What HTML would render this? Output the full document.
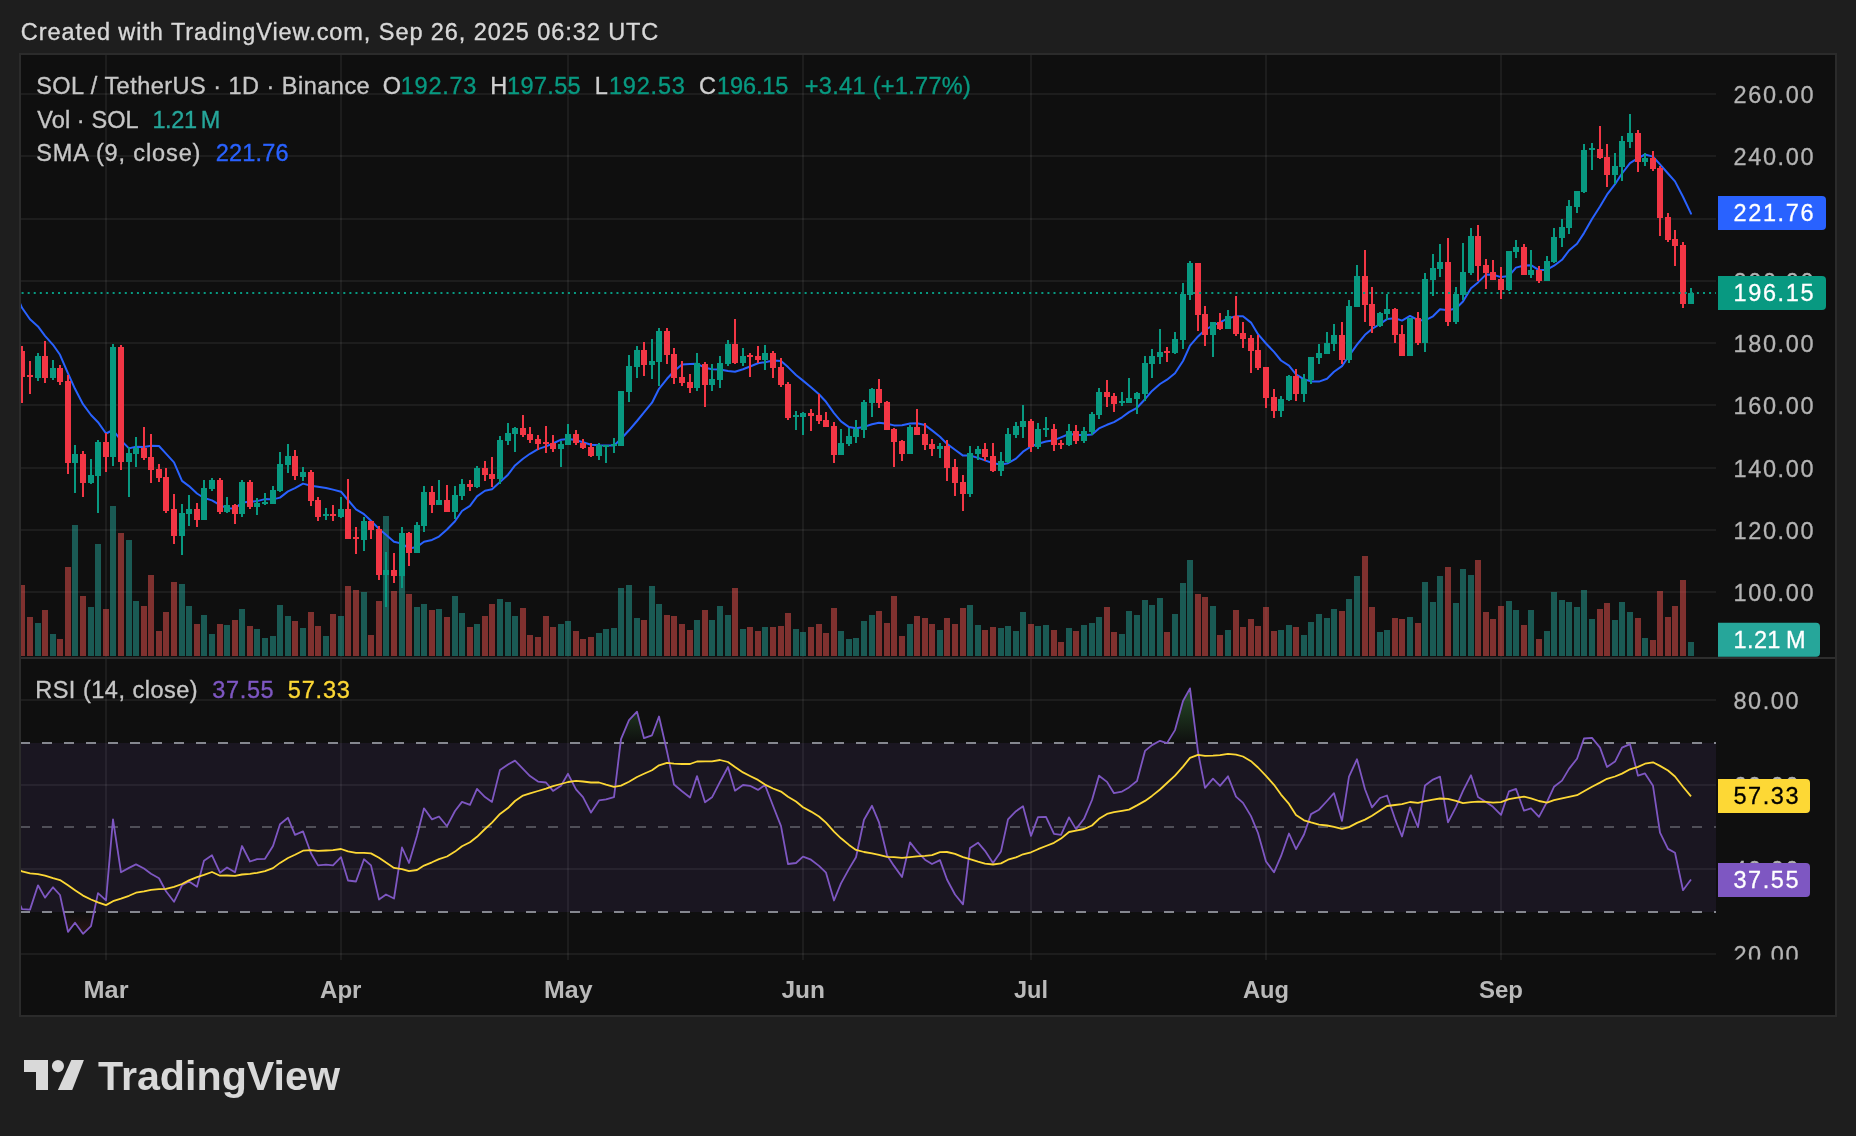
<!DOCTYPE html><html><head><meta charset="utf-8"><title>SOL / TetherUS chart</title><style>html,body{margin:0;padding:0;background:#1e1e1e;overflow:hidden}body{width:1856px;height:1136px}</style></head><body><svg width="1856" height="1136" viewBox="0 0 1856 1136" font-family='"Liberation Sans", Arial, sans-serif' style="display:block;will-change:transform"><rect width="1856" height="1136" fill="#1e1e1e"/><rect x="20" y="54" width="1816" height="962" fill="#0f0f0f" stroke="#2b2b2b" stroke-width="2"/><text x="20.75" y="40" font-size="23.5" fill="#d8d8d8" stroke="#d8d8d8" stroke-width="0.35" textLength="637.6" lengthAdjust="spacing">Created with TradingView.com, Sep 26, 2025 06:32 UTC</text><defs><clipPath id="cpm"><rect x="21" y="55" width="1695" height="602"/></clipPath><clipPath id="cpr"><rect x="21" y="659" width="1695" height="296"/></clipPath><clipPath id="cpax"><rect x="1717" y="659" width="118" height="300.5"/></clipPath><linearGradient id="gUp" gradientUnits="userSpaceOnUse" x1="0" y1="616" x2="0" y2="743"><stop offset="0" stop-color="#4caf50" stop-opacity="0.9"/><stop offset="1" stop-color="#4caf50" stop-opacity="0"/></linearGradient><linearGradient id="gDn" gradientUnits="userSpaceOnUse" x1="0" y1="912" x2="0" y2="1039"><stop offset="0" stop-color="#ff5252" stop-opacity="0"/><stop offset="1" stop-color="#ff5252" stop-opacity="0.7"/></linearGradient><clipPath id="cpUp"><rect x="21" y="659" width="1695" height="84.1"/></clipPath><clipPath id="cpDn"><rect x="21" y="911.9" width="1695" height="43"/></clipPath></defs><rect x="21" y="743.0" width="1695" height="169.0" fill="#7e57c2" fill-opacity="0.1"/><path d="M106.0 55V960 M341.0 55V960 M568.0 55V960 M803.0 55V960 M1031.0 55V960 M1266.0 55V960 M1501.0 55V960" stroke="#ffffff" stroke-opacity="0.058" stroke-width="2" fill="none"/><path d="M21 592.0H1716 M21 530.0H1716 M21 468.0H1716 M21 405.0H1716 M21 343.0H1716 M21 281.0H1716 M21 219.0H1716 M21 156.0H1716 M21 94.0H1716 M21 700.0H1716 M21 785.0H1716 M21 869.0H1716 M21 954.0H1716" stroke="#ffffff" stroke-opacity="0.058" stroke-width="2" fill="none"/><path d="M21 658H1835" stroke="#2e2e2e" stroke-width="2" fill="none"/><g clip-path="url(#cpm)"><path d="M35.00 623.0h6.0V656h-6.0zM50.00 634.0h6.0V656h-6.0zM72.00 525.0h6.0V656h-6.0zM88.00 607.0h6.0V656h-6.0zM95.00 544.0h6.0V656h-6.0zM110.00 506.0h6.0V656h-6.0zM126.00 540.0h6.0V656h-6.0zM133.00 601.0h6.0V656h-6.0zM179.00 584.0h6.0V656h-6.0zM186.00 606.0h6.0V656h-6.0zM201.00 615.0h6.0V656h-6.0zM209.00 634.0h6.0V656h-6.0zM224.00 625.0h6.0V656h-6.0zM239.00 609.0h6.0V656h-6.0zM254.00 629.0h6.0V656h-6.0zM262.00 638.0h6.0V656h-6.0zM270.00 636.0h6.0V656h-6.0zM277.00 605.0h6.0V656h-6.0zM285.00 616.0h6.0V656h-6.0zM300.00 628.0h6.0V656h-6.0zM323.00 636.0h6.0V656h-6.0zM338.00 616.0h6.0V656h-6.0zM361.00 592.0h6.0V656h-6.0zM383.00 516.0h6.0V656h-6.0zM399.00 543.0h6.0V656h-6.0zM414.00 607.0h6.0V656h-6.0zM421.00 604.0h6.0V656h-6.0zM436.00 609.0h6.0V656h-6.0zM452.00 596.0h6.0V656h-6.0zM459.00 613.0h6.0V656h-6.0zM474.00 624.0h6.0V656h-6.0zM497.00 599.0h6.0V656h-6.0zM505.00 602.0h6.0V656h-6.0zM512.00 616.0h6.0V656h-6.0zM558.00 624.0h6.0V656h-6.0zM565.00 621.0h6.0V656h-6.0zM596.00 633.0h6.0V656h-6.0zM603.00 629.0h6.0V656h-6.0zM611.00 628.0h6.0V656h-6.0zM618.00 588.0h6.0V656h-6.0zM626.00 585.0h6.0V656h-6.0zM634.00 618.0h6.0V656h-6.0zM649.00 586.0h6.0V656h-6.0zM656.00 604.0h6.0V656h-6.0zM694.00 620.0h6.0V656h-6.0zM709.00 620.0h6.0V656h-6.0zM717.00 606.0h6.0V656h-6.0zM725.00 615.0h6.0V656h-6.0zM740.00 629.0h6.0V656h-6.0zM762.00 627.0h6.0V656h-6.0zM793.00 629.0h6.0V656h-6.0zM800.00 632.0h6.0V656h-6.0zM838.00 631.0h6.0V656h-6.0zM846.00 639.0h6.0V656h-6.0zM853.00 638.0h6.0V656h-6.0zM861.00 621.0h6.0V656h-6.0zM869.00 615.0h6.0V656h-6.0zM907.00 624.0h6.0V656h-6.0zM937.00 630.0h6.0V656h-6.0zM967.00 605.0h6.0V656h-6.0zM975.00 625.0h6.0V656h-6.0zM998.00 628.0h6.0V656h-6.0zM1005.00 626.0h6.0V656h-6.0zM1013.00 631.0h6.0V656h-6.0zM1020.00 612.0h6.0V656h-6.0zM1035.00 626.0h6.0V656h-6.0zM1043.00 625.0h6.0V656h-6.0zM1066.00 628.0h6.0V656h-6.0zM1081.00 625.0h6.0V656h-6.0zM1089.00 623.0h6.0V656h-6.0zM1096.00 617.0h6.0V656h-6.0zM1119.00 634.0h6.0V656h-6.0zM1126.00 611.0h6.0V656h-6.0zM1134.00 615.0h6.0V656h-6.0zM1142.00 600.0h6.0V656h-6.0zM1149.00 605.0h6.0V656h-6.0zM1157.00 598.0h6.0V656h-6.0zM1172.00 614.0h6.0V656h-6.0zM1180.00 583.0h6.0V656h-6.0zM1187.00 560.0h6.0V656h-6.0zM1210.00 606.0h6.0V656h-6.0zM1225.00 630.0h6.0V656h-6.0zM1278.00 630.0h6.0V656h-6.0zM1286.00 625.0h6.0V656h-6.0zM1301.00 635.0h6.0V656h-6.0zM1308.00 622.0h6.0V656h-6.0zM1316.00 614.0h6.0V656h-6.0zM1324.00 618.0h6.0V656h-6.0zM1331.00 609.0h6.0V656h-6.0zM1346.00 599.0h6.0V656h-6.0zM1354.00 576.0h6.0V656h-6.0zM1377.00 632.0h6.0V656h-6.0zM1384.00 630.0h6.0V656h-6.0zM1407.00 617.0h6.0V656h-6.0zM1422.00 582.0h6.0V656h-6.0zM1430.00 602.0h6.0V656h-6.0zM1437.00 576.0h6.0V656h-6.0zM1453.00 603.0h6.0V656h-6.0zM1460.00 569.0h6.0V656h-6.0zM1468.00 575.0h6.0V656h-6.0zM1506.00 601.0h6.0V656h-6.0zM1513.00 610.0h6.0V656h-6.0zM1528.00 610.0h6.0V656h-6.0zM1544.00 631.0h6.0V656h-6.0zM1551.00 592.0h6.0V656h-6.0zM1559.00 600.0h6.0V656h-6.0zM1566.00 602.0h6.0V656h-6.0zM1574.00 607.0h6.0V656h-6.0zM1581.00 590.0h6.0V656h-6.0zM1589.00 619.0h6.0V656h-6.0zM1612.00 620.0h6.0V656h-6.0zM1619.00 602.0h6.0V656h-6.0zM1627.00 612.0h6.0V656h-6.0zM1642.00 638.0h6.0V656h-6.0zM1688.00 642.0h6.0V656h-6.0z" fill="#26a69a" fill-opacity="0.5"/><path d="M19.00 585.0h6.0V656h-6.0zM27.00 617.0h6.0V656h-6.0zM42.00 610.0h6.0V656h-6.0zM57.00 639.0h6.0V656h-6.0zM65.00 567.0h6.0V656h-6.0zM80.00 596.0h6.0V656h-6.0zM103.00 609.0h6.0V656h-6.0zM118.00 533.0h6.0V656h-6.0zM141.00 606.0h6.0V656h-6.0zM148.00 575.0h6.0V656h-6.0zM156.00 631.0h6.0V656h-6.0zM163.00 612.0h6.0V656h-6.0zM171.00 582.0h6.0V656h-6.0zM194.00 624.0h6.0V656h-6.0zM217.00 624.0h6.0V656h-6.0zM232.00 620.0h6.0V656h-6.0zM247.00 626.0h6.0V656h-6.0zM292.00 621.0h6.0V656h-6.0zM308.00 612.0h6.0V656h-6.0zM315.00 626.0h6.0V656h-6.0zM330.00 614.0h6.0V656h-6.0zM345.00 586.0h6.0V656h-6.0zM353.00 590.0h6.0V656h-6.0zM368.00 635.0h6.0V656h-6.0zM376.00 601.0h6.0V656h-6.0zM391.00 591.0h6.0V656h-6.0zM406.00 594.0h6.0V656h-6.0zM429.00 610.0h6.0V656h-6.0zM444.00 617.0h6.0V656h-6.0zM467.00 627.0h6.0V656h-6.0zM482.00 616.0h6.0V656h-6.0zM489.00 604.0h6.0V656h-6.0zM520.00 608.0h6.0V656h-6.0zM527.00 635.0h6.0V656h-6.0zM535.00 637.0h6.0V656h-6.0zM543.00 616.0h6.0V656h-6.0zM550.00 627.0h6.0V656h-6.0zM573.00 631.0h6.0V656h-6.0zM580.00 639.0h6.0V656h-6.0zM588.00 637.0h6.0V656h-6.0zM641.00 620.0h6.0V656h-6.0zM664.00 615.0h6.0V656h-6.0zM671.00 616.0h6.0V656h-6.0zM679.00 624.0h6.0V656h-6.0zM687.00 630.0h6.0V656h-6.0zM702.00 610.0h6.0V656h-6.0zM732.00 588.0h6.0V656h-6.0zM747.00 627.0h6.0V656h-6.0zM755.00 631.0h6.0V656h-6.0zM770.00 627.0h6.0V656h-6.0zM778.00 626.0h6.0V656h-6.0zM785.00 613.0h6.0V656h-6.0zM808.00 627.0h6.0V656h-6.0zM816.00 624.0h6.0V656h-6.0zM823.00 633.0h6.0V656h-6.0zM831.00 608.0h6.0V656h-6.0zM876.00 611.0h6.0V656h-6.0zM884.00 623.0h6.0V656h-6.0zM891.00 596.0h6.0V656h-6.0zM899.00 636.0h6.0V656h-6.0zM914.00 616.0h6.0V656h-6.0zM922.00 618.0h6.0V656h-6.0zM929.00 624.0h6.0V656h-6.0zM944.00 618.0h6.0V656h-6.0zM952.00 624.0h6.0V656h-6.0zM960.00 608.0h6.0V656h-6.0zM982.00 630.0h6.0V656h-6.0zM990.00 627.0h6.0V656h-6.0zM1028.00 624.0h6.0V656h-6.0zM1051.00 630.0h6.0V656h-6.0zM1058.00 642.0h6.0V656h-6.0zM1073.00 631.0h6.0V656h-6.0zM1104.00 607.0h6.0V656h-6.0zM1111.00 632.0h6.0V656h-6.0zM1164.00 632.0h6.0V656h-6.0zM1195.00 594.0h6.0V656h-6.0zM1202.00 597.0h6.0V656h-6.0zM1217.00 635.0h6.0V656h-6.0zM1233.00 610.0h6.0V656h-6.0zM1240.00 627.0h6.0V656h-6.0zM1248.00 619.0h6.0V656h-6.0zM1255.00 626.0h6.0V656h-6.0zM1263.00 607.0h6.0V656h-6.0zM1271.00 631.0h6.0V656h-6.0zM1293.00 627.0h6.0V656h-6.0zM1339.00 611.0h6.0V656h-6.0zM1362.00 556.0h6.0V656h-6.0zM1369.00 607.0h6.0V656h-6.0zM1392.00 618.0h6.0V656h-6.0zM1399.00 619.0h6.0V656h-6.0zM1415.00 623.0h6.0V656h-6.0zM1445.00 567.0h6.0V656h-6.0zM1475.00 560.0h6.0V656h-6.0zM1483.00 612.0h6.0V656h-6.0zM1490.00 619.0h6.0V656h-6.0zM1498.00 606.0h6.0V656h-6.0zM1521.00 625.0h6.0V656h-6.0zM1536.00 639.0h6.0V656h-6.0zM1597.00 609.0h6.0V656h-6.0zM1604.00 603.0h6.0V656h-6.0zM1635.00 618.0h6.0V656h-6.0zM1650.00 640.0h6.0V656h-6.0zM1657.00 591.0h6.0V656h-6.0zM1665.00 617.0h6.0V656h-6.0zM1672.00 606.0h6.0V656h-6.0zM1680.00 580.0h6.0V656h-6.0z" fill="#ef5350" fill-opacity="0.5"/><polyline points="15.0,292.0 22.0,307.8 30.0,319.2 38.0,326.4 45.0,335.8 53.0,344.8 60.0,354.8 68.0,373.4 75.0,388.8 83.0,404.2 91.0,415.0 98.0,422.2 106.0,433.5 113.0,430.0 121.0,440.4 129.0,448.4 136.0,446.7 144.0,447.1 151.0,445.7 159.0,446.0 166.0,453.7 174.0,462.4 182.0,480.9 189.0,486.1 197.0,493.5 204.0,498.0 212.0,500.4 220.0,505.1 227.0,508.2 235.0,508.5 242.0,502.5 250.0,501.8 257.0,501.1 265.0,499.1 273.0,499.4 280.0,497.6 288.0,491.4 295.0,488.2 303.0,483.6 311.0,485.7 318.0,486.8 326.0,488.0 333.0,489.6 341.0,491.7 348.0,500.0 356.0,509.3 364.0,514.2 371.0,520.7 379.0,528.9 386.0,534.8 394.0,541.7 402.0,543.6 409.0,548.4 417.0,546.9 424.0,541.7 432.0,539.9 439.0,536.6 447.0,529.5 455.0,521.2 462.0,511.0 470.0,505.8 477.0,496.4 485.0,490.8 492.0,489.3 500.0,482.1 508.0,474.7 515.0,465.4 523.0,458.7 530.0,453.8 538.0,449.1 546.0,446.4 553.0,443.5 561.0,439.7 568.0,439.0 576.0,440.1 583.0,442.3 591.0,444.7 599.0,445.3 606.0,445.4 614.0,445.4 621.0,439.0 629.0,430.3 637.0,421.0 644.0,412.3 652.0,402.7 659.0,388.8 667.0,378.8 674.0,371.3 682.0,364.5 690.0,364.1 697.0,363.8 705.0,367.7 712.0,369.2 720.0,369.5 728.0,370.9 735.0,371.8 743.0,369.3 750.0,366.5 758.0,363.3 765.0,362.2 773.0,360.4 781.0,361.0 788.0,367.1 796.0,375.0 803.0,380.6 811.0,387.2 819.0,394.3 826.0,401.8 834.0,413.1 841.0,421.4 849.0,427.1 856.0,428.3 864.0,426.9 872.0,424.2 879.0,422.7 887.0,423.7 894.0,425.4 902.0,425.2 910.0,423.5 917.0,423.3 925.0,425.1 932.0,430.4 940.0,436.7 947.0,443.9 955.0,449.8 963.0,455.6 970.0,455.5 978.0,457.9 985.0,460.4 993.0,463.3 1001.0,464.6 1008.0,463.2 1016.0,458.6 1023.0,451.7 1031.0,446.5 1038.0,443.8 1046.0,441.5 1054.0,440.2 1061.0,437.3 1069.0,434.0 1076.0,434.8 1084.0,435.3 1092.0,434.5 1099.0,428.4 1107.0,424.8 1114.0,422.1 1122.0,417.3 1129.0,412.1 1137.0,407.8 1145.0,399.2 1152.0,390.9 1160.0,384.0 1167.0,379.7 1175.0,373.2 1183.0,361.0 1190.0,345.7 1198.0,336.4 1205.0,330.0 1213.0,325.4 1220.0,322.4 1228.0,318.4 1236.0,316.3 1243.0,316.3 1251.0,322.6 1258.0,334.2 1266.0,343.5 1274.0,351.9 1281.0,360.5 1289.0,365.7 1296.0,374.4 1304.0,379.3 1311.0,381.4 1319.0,381.6 1327.0,378.8 1334.0,371.8 1342.0,366.1 1349.0,355.8 1357.0,344.7 1365.0,334.8 1372.0,328.9 1380.0,324.0 1387.0,319.1 1395.0,318.2 1402.0,320.6 1410.0,315.9 1418.0,320.0 1425.0,320.4 1433.0,316.3 1440.0,309.2 1448.0,310.2 1456.0,308.5 1463.0,301.5 1471.0,288.2 1478.0,282.4 1486.0,274.6 1493.0,274.7 1501.0,277.1 1509.0,275.9 1516.0,267.6 1524.0,265.5 1531.0,265.2 1539.0,270.2 1547.0,269.7 1554.0,265.7 1562.0,259.8 1569.0,250.5 1577.0,243.8 1584.0,233.1 1592.0,219.0 1600.0,206.5 1607.0,194.7 1615.0,184.2 1622.0,173.5 1630.0,163.1 1638.0,158.2 1645.0,154.5 1653.0,156.6 1660.0,164.4 1668.0,173.5 1675.0,181.4 1683.0,196.7 1691.0,213.6" stroke="#2962ff" stroke-width="2" fill="none" stroke-linejoin="round" stroke-linecap="round"/><path d="M38.00 353.0V381.0M53.00 360.0V380.0M75.00 445.0V493.0M91.00 459.0V484.0M98.00 440.0V513.0M113.00 344.0V466.0M129.00 447.0V497.0M136.00 437.0V467.0M182.00 504.0V555.0M189.00 495.0V526.0M204.00 480.0V520.0M212.00 478.0V491.0M227.00 497.0V513.0M242.00 480.0V517.0M257.00 498.0V515.0M265.00 493.0V505.0M273.00 486.0V504.0M280.00 452.0V492.0M288.00 444.0V473.0M303.00 467.0V481.0M326.00 508.0V520.0M341.00 497.0V518.0M364.00 517.0V551.0M386.00 552.0V607.0M402.00 527.0V588.0M417.00 522.0V553.0M424.00 486.0V532.0M439.00 480.0V505.0M455.00 486.0V519.0M462.00 479.0V500.0M477.00 466.0V488.0M500.00 436.0V484.0M508.00 423.0V445.0M515.00 427.0V452.0M561.00 441.0V467.0M568.00 424.0V445.0M599.00 443.0V460.0M606.00 445.0V463.0M614.00 438.0V453.0M621.00 391.0V446.0M629.00 355.0V402.0M637.00 346.0V378.0M652.00 339.0V379.0M659.00 328.0V386.0M697.00 353.0V391.0M712.00 364.0V391.0M720.00 356.0V388.0M728.00 340.0V366.0M743.00 348.0V366.0M765.00 345.0V370.0M796.00 411.0V430.0M803.00 412.0V435.0M841.00 429.0V455.0M849.00 428.0V446.0M856.00 420.0V443.0M864.00 400.0V438.0M872.00 388.0V417.0M910.00 425.0V454.0M940.00 443.0V458.0M970.00 446.0V497.0M978.00 446.0V460.0M1001.00 452.0V476.0M1008.00 428.0V463.0M1016.00 422.0V438.0M1023.00 405.0V438.0M1038.00 423.0V449.0M1046.00 417.0V437.0M1069.00 424.0V446.0M1084.00 427.0V443.0M1092.00 412.0V435.0M1099.00 388.0V419.0M1122.00 392.0V406.0M1129.00 378.0V403.0M1137.00 392.0V414.0M1145.00 356.0V401.0M1152.00 349.0V378.0M1160.00 329.0V364.0M1175.00 332.0V354.0M1183.00 283.0V349.0M1190.00 261.0V300.0M1213.00 322.0V357.0M1228.00 310.0V329.0M1281.00 396.0V417.0M1289.00 375.0V401.0M1304.00 374.0V402.0M1311.00 357.0V384.0M1319.00 344.0V364.0M1327.00 332.0V354.0M1334.00 324.0V351.0M1349.00 300.0V363.0M1357.00 265.0V307.0M1380.00 312.0V327.0M1387.00 294.0V320.0M1410.00 318.0V356.0M1425.00 273.0V352.0M1433.00 254.0V296.0M1440.00 244.0V277.0M1456.00 287.0V324.0M1463.00 243.0V300.0M1471.00 228.0V275.0M1509.00 251.0V291.0M1516.00 240.0V258.0M1531.00 250.0V278.0M1547.00 256.0V281.0M1554.00 228.0V263.0M1562.00 219.0V247.0M1569.00 200.0V234.0M1577.00 191.0V213.0M1584.00 144.0V193.0M1592.00 143.0V170.0M1615.00 153.0V184.0M1622.00 136.0V181.0M1630.00 114.0V148.0M1645.00 153.0V166.0M1691.00 288.0V304.0" stroke="#089981" stroke-width="2" fill="none"/><path d="M35.00 356.0h6.0V378.0h-6.0zM50.00 368.0h6.0V378.0h-6.0zM72.00 454.0h6.0V463.0h-6.0zM88.00 475.0h6.0V483.0h-6.0zM95.00 442.0h6.0V476.0h-6.0zM110.00 347.0h6.0V457.0h-6.0zM126.00 453.0h6.0V462.0h-6.0zM133.00 448.0h6.0V454.0h-6.0zM179.00 513.0h6.0V536.0h-6.0zM186.00 509.0h6.0V514.0h-6.0zM201.00 488.0h6.0V520.0h-6.0zM209.00 480.0h6.0V489.0h-6.0zM224.00 505.0h6.0V512.0h-6.0zM239.00 482.0h6.0V514.0h-6.0zM254.00 503.0h6.0V507.0h-6.0zM262.00 502.0h6.0V504.0h-6.0zM270.00 490.0h6.0V504.0h-6.0zM277.00 464.0h6.0V491.0h-6.0zM285.00 456.0h6.0V465.0h-6.0zM300.00 472.0h6.0V477.0h-6.0zM323.00 514.0h6.0V516.0h-6.0zM338.00 509.0h6.0V517.0h-6.0zM361.00 521.0h6.0V540.0h-6.0zM383.00 570.0h6.0V575.0h-6.0zM399.00 533.0h6.0V576.0h-6.0zM414.00 525.0h6.0V553.0h-6.0zM421.00 492.0h6.0V526.0h-6.0zM436.00 500.0h6.0V505.0h-6.0zM452.00 495.0h6.0V512.0h-6.0zM459.00 484.0h6.0V496.0h-6.0zM474.00 468.0h6.0V487.0h-6.0zM497.00 440.0h6.0V479.0h-6.0zM505.00 433.0h6.0V441.0h-6.0zM512.00 428.0h6.0V434.0h-6.0zM558.00 444.0h6.0V449.0h-6.0zM565.00 434.0h6.0V445.0h-6.0zM596.00 445.0h6.0V456.0h-6.0zM603.00 445.0h6.0V447.0h-6.0zM611.00 444.0h6.0V446.0h-6.0zM618.00 391.0h6.0V446.0h-6.0zM626.00 366.0h6.0V392.0h-6.0zM634.00 350.0h6.0V367.0h-6.0zM649.00 361.0h6.0V365.0h-6.0zM656.00 331.0h6.0V362.0h-6.0zM694.00 363.0h6.0V388.0h-6.0zM709.00 379.0h6.0V385.0h-6.0zM717.00 363.0h6.0V380.0h-6.0zM725.00 344.0h6.0V364.0h-6.0zM740.00 356.0h6.0V363.0h-6.0zM762.00 353.0h6.0V360.0h-6.0zM793.00 415.0h6.0V417.0h-6.0zM800.00 413.0h6.0V417.0h-6.0zM838.00 443.0h6.0V455.0h-6.0zM846.00 436.0h6.0V444.0h-6.0zM853.00 429.0h6.0V437.0h-6.0zM861.00 402.0h6.0V430.0h-6.0zM869.00 389.0h6.0V403.0h-6.0zM907.00 427.0h6.0V454.0h-6.0zM937.00 446.0h6.0V449.0h-6.0zM967.00 453.0h6.0V494.0h-6.0zM975.00 449.0h6.0V454.0h-6.0zM998.00 461.0h6.0V471.0h-6.0zM1005.00 434.0h6.0V462.0h-6.0zM1013.00 426.0h6.0V435.0h-6.0zM1020.00 421.0h6.0V427.0h-6.0zM1035.00 429.0h6.0V447.0h-6.0zM1043.00 428.0h6.0V430.0h-6.0zM1066.00 431.0h6.0V445.0h-6.0zM1081.00 431.0h6.0V441.0h-6.0zM1089.00 414.0h6.0V432.0h-6.0zM1096.00 392.0h6.0V415.0h-6.0zM1119.00 401.0h6.0V403.0h-6.0zM1126.00 398.0h6.0V403.0h-6.0zM1134.00 393.0h6.0V399.0h-6.0zM1142.00 363.0h6.0V394.0h-6.0zM1149.00 356.0h6.0V364.0h-6.0zM1157.00 352.0h6.0V357.0h-6.0zM1172.00 339.0h6.0V353.0h-6.0zM1180.00 294.0h6.0V340.0h-6.0zM1187.00 263.0h6.0V295.0h-6.0zM1210.00 322.0h6.0V335.0h-6.0zM1225.00 316.0h6.0V329.0h-6.0zM1278.00 399.0h6.0V411.0h-6.0zM1286.00 376.0h6.0V400.0h-6.0zM1301.00 379.0h6.0V394.0h-6.0zM1308.00 357.0h6.0V380.0h-6.0zM1316.00 353.0h6.0V358.0h-6.0zM1324.00 343.0h6.0V354.0h-6.0zM1331.00 335.0h6.0V344.0h-6.0zM1346.00 306.0h6.0V360.0h-6.0zM1354.00 276.0h6.0V307.0h-6.0zM1377.00 313.0h6.0V326.0h-6.0zM1384.00 309.0h6.0V314.0h-6.0zM1407.00 318.0h6.0V356.0h-6.0zM1422.00 279.0h6.0V343.0h-6.0zM1430.00 268.0h6.0V280.0h-6.0zM1437.00 262.0h6.0V269.0h-6.0zM1453.00 294.0h6.0V322.0h-6.0zM1460.00 272.0h6.0V295.0h-6.0zM1468.00 236.0h6.0V273.0h-6.0zM1506.00 251.0h6.0V290.0h-6.0zM1513.00 247.0h6.0V252.0h-6.0zM1528.00 270.0h6.0V275.0h-6.0zM1544.00 261.0h6.0V281.0h-6.0zM1551.00 237.0h6.0V262.0h-6.0zM1559.00 227.0h6.0V238.0h-6.0zM1566.00 206.0h6.0V228.0h-6.0zM1574.00 191.0h6.0V207.0h-6.0zM1581.00 150.0h6.0V192.0h-6.0zM1589.00 148.0h6.0V150.0h-6.0zM1612.00 166.0h6.0V175.0h-6.0zM1619.00 141.0h6.0V167.0h-6.0zM1627.00 133.0h6.0V142.0h-6.0zM1642.00 158.0h6.0V162.0h-6.0zM1688.00 293.0h6.0V304.0h-6.0z" fill="#089981"/><path d="M22.00 346.0V403.0M30.00 361.0V394.0M45.00 341.0V383.0M60.00 365.0V385.0M68.00 375.0V474.0M83.00 451.0V497.0M106.00 433.0V472.0M121.00 345.0V470.0M144.00 427.0V460.0M151.00 434.0V483.0M159.00 464.0V482.0M166.00 468.0V513.0M174.00 494.0V544.0M197.00 503.0V527.0M220.00 478.0V514.0M235.00 504.0V524.0M250.00 480.0V509.0M295.00 450.0V480.0M311.00 470.0V506.0M318.00 497.0V521.0M333.00 505.0V521.0M348.00 479.0V539.0M356.00 527.0V554.0M371.00 521.0V539.0M379.00 526.0V580.0M394.00 553.0V583.0M409.00 532.0V566.0M432.00 486.0V513.0M447.00 485.0V512.0M470.00 480.0V491.0M485.00 461.0V481.0M492.00 457.0V487.0M523.00 415.0V437.0M530.00 427.0V443.0M538.00 435.0V450.0M546.00 426.0V453.0M553.00 435.0V452.0M576.00 430.0V445.0M583.00 439.0V449.0M591.00 443.0V457.0M644.00 342.0V376.0M667.00 328.0V364.0M674.00 348.0V384.0M682.00 361.0V386.0M690.00 374.0V393.0M705.00 362.0V407.0M735.00 319.0V364.0M750.00 353.0V377.0M758.00 346.0V363.0M773.00 351.0V378.0M781.00 358.0V387.0M788.00 382.0V420.0M811.00 409.0V431.0M819.00 394.0V424.0M826.00 412.0V427.0M834.00 422.0V463.0M879.00 379.0V408.0M887.00 401.0V430.0M894.00 428.0V467.0M902.00 440.0V461.0M917.00 409.0V435.0M925.00 423.0V450.0M932.00 439.0V456.0M947.00 440.0V481.0M955.00 459.0V496.0M963.00 475.0V511.0M985.00 443.0V461.0M993.00 443.0V472.0M1031.00 419.0V452.0M1054.00 424.0V451.0M1061.00 440.0V449.0M1076.00 425.0V444.0M1107.00 380.0V407.0M1114.00 393.0V412.0M1167.00 347.0V362.0M1198.00 263.0V331.0M1205.00 306.0V346.0M1220.00 313.0V330.0M1236.00 296.0V336.0M1243.00 322.0V348.0M1251.00 335.0V373.0M1258.00 335.0V370.0M1266.00 367.0V408.0M1274.00 389.0V418.0M1296.00 369.0V401.0M1342.00 322.0V364.0M1365.00 250.0V322.0M1372.00 287.0V333.0M1395.00 308.0V343.0M1402.00 325.0V356.0M1418.00 312.0V345.0M1448.00 238.0V326.0M1478.00 225.0V281.0M1486.00 259.0V289.0M1493.00 260.0V280.0M1501.00 267.0V299.0M1524.00 244.0V275.0M1539.00 266.0V283.0M1600.00 126.0V159.0M1607.00 144.0V187.0M1638.00 130.0V172.0M1653.00 151.0V171.0M1660.00 166.0V236.0M1668.00 213.0V242.0M1675.00 230.0V266.0M1683.00 242.0V308.0" stroke="#f23645" stroke-width="2" fill="none"/><path d="M19.00 351.0h6.0V377.0h-6.0zM27.00 375.0h6.0V377.0h-6.0zM42.00 356.0h6.0V378.0h-6.0zM57.00 368.0h6.0V382.0h-6.0zM65.00 381.0h6.0V463.0h-6.0zM80.00 454.0h6.0V483.0h-6.0zM103.00 442.0h6.0V457.0h-6.0zM118.00 347.0h6.0V462.0h-6.0zM141.00 448.0h6.0V458.0h-6.0zM148.00 457.0h6.0V470.0h-6.0zM156.00 469.0h6.0V478.0h-6.0zM163.00 477.0h6.0V511.0h-6.0zM171.00 509.0h6.0V536.0h-6.0zM194.00 509.0h6.0V520.0h-6.0zM217.00 480.0h6.0V512.0h-6.0zM232.00 505.0h6.0V514.0h-6.0zM247.00 482.0h6.0V507.0h-6.0zM292.00 456.0h6.0V476.0h-6.0zM308.00 472.0h6.0V501.0h-6.0zM315.00 500.0h6.0V517.0h-6.0zM330.00 514.0h6.0V516.0h-6.0zM345.00 509.0h6.0V539.0h-6.0zM353.00 537.0h6.0V539.0h-6.0zM368.00 521.0h6.0V530.0h-6.0zM376.00 529.0h6.0V575.0h-6.0zM391.00 570.0h6.0V576.0h-6.0zM406.00 533.0h6.0V553.0h-6.0zM429.00 492.0h6.0V505.0h-6.0zM444.00 500.0h6.0V512.0h-6.0zM467.00 484.0h6.0V487.0h-6.0zM482.00 468.0h6.0V475.0h-6.0zM489.00 474.0h6.0V479.0h-6.0zM520.00 428.0h6.0V435.0h-6.0zM527.00 434.0h6.0V440.0h-6.0zM535.00 439.0h6.0V444.0h-6.0zM543.00 442.0h6.0V444.0h-6.0zM550.00 443.0h6.0V449.0h-6.0zM573.00 434.0h6.0V443.0h-6.0zM580.00 443.0h6.0V448.0h-6.0zM588.00 447.0h6.0V456.0h-6.0zM641.00 350.0h6.0V365.0h-6.0zM664.00 331.0h6.0V355.0h-6.0zM671.00 354.0h6.0V378.0h-6.0zM679.00 377.0h6.0V383.0h-6.0zM687.00 382.0h6.0V388.0h-6.0zM702.00 364.0h6.0V385.0h-6.0zM732.00 344.0h6.0V363.0h-6.0zM747.00 355.0h6.0V357.0h-6.0zM755.00 356.0h6.0V360.0h-6.0zM770.00 353.0h6.0V368.0h-6.0zM778.00 367.0h6.0V385.0h-6.0zM785.00 384.0h6.0V418.0h-6.0zM808.00 413.0h6.0V416.0h-6.0zM816.00 415.0h6.0V421.0h-6.0zM823.00 420.0h6.0V427.0h-6.0zM831.00 426.0h6.0V455.0h-6.0zM876.00 389.0h6.0V403.0h-6.0zM884.00 402.0h6.0V430.0h-6.0zM891.00 429.0h6.0V442.0h-6.0zM899.00 441.0h6.0V454.0h-6.0zM914.00 427.0h6.0V435.0h-6.0zM922.00 434.0h6.0V445.0h-6.0zM929.00 444.0h6.0V449.0h-6.0zM944.00 446.0h6.0V468.0h-6.0zM952.00 467.0h6.0V483.0h-6.0zM960.00 482.0h6.0V494.0h-6.0zM982.00 449.0h6.0V457.0h-6.0zM990.00 456.0h6.0V471.0h-6.0zM1028.00 421.0h6.0V447.0h-6.0zM1051.00 429.0h6.0V445.0h-6.0zM1058.00 443.0h6.0V445.0h-6.0zM1073.00 431.0h6.0V441.0h-6.0zM1104.00 392.0h6.0V397.0h-6.0zM1111.00 396.0h6.0V404.0h-6.0zM1164.00 351.0h6.0V353.0h-6.0zM1195.00 263.0h6.0V315.0h-6.0zM1202.00 314.0h6.0V335.0h-6.0zM1217.00 322.0h6.0V329.0h-6.0zM1233.00 316.0h6.0V334.0h-6.0zM1240.00 333.0h6.0V339.0h-6.0zM1248.00 338.0h6.0V351.0h-6.0zM1255.00 350.0h6.0V368.0h-6.0zM1263.00 367.0h6.0V398.0h-6.0zM1271.00 397.0h6.0V411.0h-6.0zM1293.00 376.0h6.0V394.0h-6.0zM1339.00 335.0h6.0V360.0h-6.0zM1362.00 276.0h6.0V305.0h-6.0zM1369.00 304.0h6.0V326.0h-6.0zM1392.00 309.0h6.0V335.0h-6.0zM1399.00 334.0h6.0V356.0h-6.0zM1415.00 318.0h6.0V343.0h-6.0zM1445.00 262.0h6.0V322.0h-6.0zM1475.00 236.0h6.0V266.0h-6.0zM1483.00 265.0h6.0V273.0h-6.0zM1490.00 272.0h6.0V280.0h-6.0zM1498.00 279.0h6.0V290.0h-6.0zM1521.00 247.0h6.0V275.0h-6.0zM1536.00 270.0h6.0V281.0h-6.0zM1597.00 149.0h6.0V158.0h-6.0zM1604.00 157.0h6.0V175.0h-6.0zM1635.00 133.0h6.0V162.0h-6.0zM1650.00 158.0h6.0V169.0h-6.0zM1657.00 168.0h6.0V218.0h-6.0zM1665.00 217.0h6.0V240.0h-6.0zM1672.00 239.0h6.0V246.0h-6.0zM1680.00 245.0h6.0V304.0h-6.0z" fill="#f23645"/><path d="M21.6 293H1716" stroke="#089981" stroke-width="2" stroke-dasharray="2 4.07" fill="none"/></g><g clip-path="url(#cpr)"><path d="M20 743.0H1716" stroke="#85878f" stroke-opacity="1" stroke-width="2" stroke-dasharray="10 12" fill="none"/><path d="M20 827.0H1716" stroke="#85878f" stroke-opacity="0.5" stroke-width="2" stroke-dasharray="10 12" fill="none"/><path d="M20 912.0H1716" stroke="#85878f" stroke-opacity="1" stroke-width="2" stroke-dasharray="10 12" fill="none"/><path d="M15.0,893.6 L22.0,909.2 L30.0,909.6 L38.0,885.3 L45.0,897.6 L53.0,887.3 L60.0,895.0 L68.0,931.9 L75.0,922.8 L83.0,933.8 L91.0,926.1 L98.0,893.1 L106.0,900.3 L113.0,819.4 L121.0,872.3 L129.0,867.9 L136.0,864.4 L144.0,868.5 L151.0,873.7 L159.0,878.2 L166.0,891.2 L174.0,901.8 L182.0,885.3 L189.0,881.5 L197.0,886.7 L204.0,860.7 L212.0,855.3 L220.0,872.7 L227.0,867.5 L235.0,872.3 L242.0,846.0 L250.0,861.5 L257.0,859.2 L265.0,858.8 L273.0,846.0 L280.0,824.2 L288.0,817.8 L295.0,834.9 L303.0,831.4 L311.0,853.3 L318.0,865.4 L326.0,864.6 L333.0,865.4 L341.0,857.2 L348.0,880.5 L356.0,881.5 L364.0,859.3 L371.0,865.4 L379.0,899.5 L386.0,894.5 L394.0,898.5 L402.0,847.5 L409.0,863.0 L417.0,835.7 L424.0,808.3 L432.0,819.4 L439.0,816.5 L447.0,826.2 L455.0,811.0 L462.0,801.9 L470.0,804.8 L477.0,788.9 L485.0,797.1 L492.0,801.9 L500.0,769.9 L508.0,764.5 L515.0,760.6 L523.0,768.9 L530.0,776.1 L538.0,781.6 L546.0,782.5 L553.0,790.9 L561.0,785.8 L568.0,773.8 L576.0,789.3 L583.0,797.1 L591.0,812.6 L599.0,800.4 L606.0,799.4 L614.0,797.1 L621.0,739.1 L629.0,720.1 L637.0,711.7 L644.0,738.2 L652.0,735.3 L659.0,716.5 L667.0,751.5 L674.0,784.5 L682.0,791.3 L690.0,797.5 L697.0,776.1 L705.0,802.3 L712.0,797.3 L720.0,781.8 L728.0,767.0 L735.0,790.7 L743.0,785.0 L750.0,785.8 L758.0,789.9 L765.0,785.0 L773.0,805.8 L781.0,826.2 L788.0,864.0 L796.0,863.0 L803.0,856.6 L811.0,859.7 L819.0,865.9 L826.0,872.7 L834.0,900.5 L841.0,883.4 L849.0,868.9 L856.0,857.2 L864.0,819.8 L872.0,805.8 L879.0,822.3 L887.0,855.3 L894.0,865.9 L902.0,877.0 L910.0,842.3 L917.0,851.4 L925.0,859.7 L932.0,864.0 L940.0,860.1 L947.0,879.5 L955.0,894.5 L963.0,904.4 L970.0,847.9 L978.0,842.7 L985.0,850.8 L993.0,863.0 L1001.0,851.4 L1008.0,819.4 L1016.0,811.2 L1023.0,806.2 L1031.0,835.9 L1038.0,817.1 L1046.0,816.9 L1054.0,833.9 L1061.0,834.9 L1069.0,817.4 L1076.0,829.1 L1084.0,818.8 L1092.0,800.0 L1099.0,775.7 L1107.0,781.9 L1114.0,793.2 L1122.0,791.6 L1129.0,787.4 L1137.0,781.0 L1145.0,750.9 L1152.0,745.1 L1160.0,740.8 L1167.0,743.1 L1175.0,730.1 L1183.0,701.0 L1190.0,688.4 L1198.0,752.0 L1205.0,787.8 L1213.0,778.6 L1220.0,785.8 L1228.0,776.3 L1236.0,796.7 L1243.0,802.9 L1251.0,816.1 L1258.0,833.0 L1266.0,861.5 L1274.0,872.3 L1281.0,856.2 L1289.0,833.5 L1296.0,849.1 L1304.0,834.5 L1311.0,814.1 L1319.0,809.7 L1327.0,801.0 L1334.0,793.2 L1342.0,820.9 L1349.0,776.7 L1357.0,759.2 L1365.0,789.3 L1372.0,807.4 L1380.0,798.0 L1387.0,795.5 L1395.0,818.8 L1402.0,836.5 L1410.0,807.3 L1418.0,827.1 L1425.0,785.4 L1433.0,779.6 L1440.0,776.7 L1448.0,822.3 L1456.0,806.8 L1463.0,790.9 L1471.0,775.2 L1478.0,797.1 L1486.0,801.9 L1493.0,806.8 L1501.0,814.9 L1509.0,791.3 L1516.0,788.9 L1524.0,810.7 L1531.0,808.3 L1539.0,816.9 L1547.0,801.9 L1554.0,786.8 L1562.0,780.6 L1569.0,768.9 L1577.0,758.7 L1584.0,738.5 L1592.0,737.9 L1600.0,747.6 L1607.0,767.0 L1615.0,761.6 L1622.0,747.6 L1630.0,744.1 L1638.0,775.7 L1645.0,773.4 L1653.0,785.8 L1660.0,832.6 L1668.0,848.9 L1675.0,852.7 L1683.0,890.2 L1691.0,879.5 L1691.0,743.0 L15.0,743.0z" fill="url(#gUp)" clip-path="url(#cpUp)"/><path d="M15.0,893.6 L22.0,909.2 L30.0,909.6 L38.0,885.3 L45.0,897.6 L53.0,887.3 L60.0,895.0 L68.0,931.9 L75.0,922.8 L83.0,933.8 L91.0,926.1 L98.0,893.1 L106.0,900.3 L113.0,819.4 L121.0,872.3 L129.0,867.9 L136.0,864.4 L144.0,868.5 L151.0,873.7 L159.0,878.2 L166.0,891.2 L174.0,901.8 L182.0,885.3 L189.0,881.5 L197.0,886.7 L204.0,860.7 L212.0,855.3 L220.0,872.7 L227.0,867.5 L235.0,872.3 L242.0,846.0 L250.0,861.5 L257.0,859.2 L265.0,858.8 L273.0,846.0 L280.0,824.2 L288.0,817.8 L295.0,834.9 L303.0,831.4 L311.0,853.3 L318.0,865.4 L326.0,864.6 L333.0,865.4 L341.0,857.2 L348.0,880.5 L356.0,881.5 L364.0,859.3 L371.0,865.4 L379.0,899.5 L386.0,894.5 L394.0,898.5 L402.0,847.5 L409.0,863.0 L417.0,835.7 L424.0,808.3 L432.0,819.4 L439.0,816.5 L447.0,826.2 L455.0,811.0 L462.0,801.9 L470.0,804.8 L477.0,788.9 L485.0,797.1 L492.0,801.9 L500.0,769.9 L508.0,764.5 L515.0,760.6 L523.0,768.9 L530.0,776.1 L538.0,781.6 L546.0,782.5 L553.0,790.9 L561.0,785.8 L568.0,773.8 L576.0,789.3 L583.0,797.1 L591.0,812.6 L599.0,800.4 L606.0,799.4 L614.0,797.1 L621.0,739.1 L629.0,720.1 L637.0,711.7 L644.0,738.2 L652.0,735.3 L659.0,716.5 L667.0,751.5 L674.0,784.5 L682.0,791.3 L690.0,797.5 L697.0,776.1 L705.0,802.3 L712.0,797.3 L720.0,781.8 L728.0,767.0 L735.0,790.7 L743.0,785.0 L750.0,785.8 L758.0,789.9 L765.0,785.0 L773.0,805.8 L781.0,826.2 L788.0,864.0 L796.0,863.0 L803.0,856.6 L811.0,859.7 L819.0,865.9 L826.0,872.7 L834.0,900.5 L841.0,883.4 L849.0,868.9 L856.0,857.2 L864.0,819.8 L872.0,805.8 L879.0,822.3 L887.0,855.3 L894.0,865.9 L902.0,877.0 L910.0,842.3 L917.0,851.4 L925.0,859.7 L932.0,864.0 L940.0,860.1 L947.0,879.5 L955.0,894.5 L963.0,904.4 L970.0,847.9 L978.0,842.7 L985.0,850.8 L993.0,863.0 L1001.0,851.4 L1008.0,819.4 L1016.0,811.2 L1023.0,806.2 L1031.0,835.9 L1038.0,817.1 L1046.0,816.9 L1054.0,833.9 L1061.0,834.9 L1069.0,817.4 L1076.0,829.1 L1084.0,818.8 L1092.0,800.0 L1099.0,775.7 L1107.0,781.9 L1114.0,793.2 L1122.0,791.6 L1129.0,787.4 L1137.0,781.0 L1145.0,750.9 L1152.0,745.1 L1160.0,740.8 L1167.0,743.1 L1175.0,730.1 L1183.0,701.0 L1190.0,688.4 L1198.0,752.0 L1205.0,787.8 L1213.0,778.6 L1220.0,785.8 L1228.0,776.3 L1236.0,796.7 L1243.0,802.9 L1251.0,816.1 L1258.0,833.0 L1266.0,861.5 L1274.0,872.3 L1281.0,856.2 L1289.0,833.5 L1296.0,849.1 L1304.0,834.5 L1311.0,814.1 L1319.0,809.7 L1327.0,801.0 L1334.0,793.2 L1342.0,820.9 L1349.0,776.7 L1357.0,759.2 L1365.0,789.3 L1372.0,807.4 L1380.0,798.0 L1387.0,795.5 L1395.0,818.8 L1402.0,836.5 L1410.0,807.3 L1418.0,827.1 L1425.0,785.4 L1433.0,779.6 L1440.0,776.7 L1448.0,822.3 L1456.0,806.8 L1463.0,790.9 L1471.0,775.2 L1478.0,797.1 L1486.0,801.9 L1493.0,806.8 L1501.0,814.9 L1509.0,791.3 L1516.0,788.9 L1524.0,810.7 L1531.0,808.3 L1539.0,816.9 L1547.0,801.9 L1554.0,786.8 L1562.0,780.6 L1569.0,768.9 L1577.0,758.7 L1584.0,738.5 L1592.0,737.9 L1600.0,747.6 L1607.0,767.0 L1615.0,761.6 L1622.0,747.6 L1630.0,744.1 L1638.0,775.7 L1645.0,773.4 L1653.0,785.8 L1660.0,832.6 L1668.0,848.9 L1675.0,852.7 L1683.0,890.2 L1691.0,879.5 L1691.0,912.0 L15.0,912.0z" fill="url(#gDn)" clip-path="url(#cpDn)"/><path d="M15.0,893.6 L22.0,909.2 L30.0,909.6 L38.0,885.3 L45.0,897.6 L53.0,887.3 L60.0,895.0 L68.0,931.9 L75.0,922.8 L83.0,933.8 L91.0,926.1 L98.0,893.1 L106.0,900.3 L113.0,819.4 L121.0,872.3 L129.0,867.9 L136.0,864.4 L144.0,868.5 L151.0,873.7 L159.0,878.2 L166.0,891.2 L174.0,901.8 L182.0,885.3 L189.0,881.5 L197.0,886.7 L204.0,860.7 L212.0,855.3 L220.0,872.7 L227.0,867.5 L235.0,872.3 L242.0,846.0 L250.0,861.5 L257.0,859.2 L265.0,858.8 L273.0,846.0 L280.0,824.2 L288.0,817.8 L295.0,834.9 L303.0,831.4 L311.0,853.3 L318.0,865.4 L326.0,864.6 L333.0,865.4 L341.0,857.2 L348.0,880.5 L356.0,881.5 L364.0,859.3 L371.0,865.4 L379.0,899.5 L386.0,894.5 L394.0,898.5 L402.0,847.5 L409.0,863.0 L417.0,835.7 L424.0,808.3 L432.0,819.4 L439.0,816.5 L447.0,826.2 L455.0,811.0 L462.0,801.9 L470.0,804.8 L477.0,788.9 L485.0,797.1 L492.0,801.9 L500.0,769.9 L508.0,764.5 L515.0,760.6 L523.0,768.9 L530.0,776.1 L538.0,781.6 L546.0,782.5 L553.0,790.9 L561.0,785.8 L568.0,773.8 L576.0,789.3 L583.0,797.1 L591.0,812.6 L599.0,800.4 L606.0,799.4 L614.0,797.1 L621.0,739.1 L629.0,720.1 L637.0,711.7 L644.0,738.2 L652.0,735.3 L659.0,716.5 L667.0,751.5 L674.0,784.5 L682.0,791.3 L690.0,797.5 L697.0,776.1 L705.0,802.3 L712.0,797.3 L720.0,781.8 L728.0,767.0 L735.0,790.7 L743.0,785.0 L750.0,785.8 L758.0,789.9 L765.0,785.0 L773.0,805.8 L781.0,826.2 L788.0,864.0 L796.0,863.0 L803.0,856.6 L811.0,859.7 L819.0,865.9 L826.0,872.7 L834.0,900.5 L841.0,883.4 L849.0,868.9 L856.0,857.2 L864.0,819.8 L872.0,805.8 L879.0,822.3 L887.0,855.3 L894.0,865.9 L902.0,877.0 L910.0,842.3 L917.0,851.4 L925.0,859.7 L932.0,864.0 L940.0,860.1 L947.0,879.5 L955.0,894.5 L963.0,904.4 L970.0,847.9 L978.0,842.7 L985.0,850.8 L993.0,863.0 L1001.0,851.4 L1008.0,819.4 L1016.0,811.2 L1023.0,806.2 L1031.0,835.9 L1038.0,817.1 L1046.0,816.9 L1054.0,833.9 L1061.0,834.9 L1069.0,817.4 L1076.0,829.1 L1084.0,818.8 L1092.0,800.0 L1099.0,775.7 L1107.0,781.9 L1114.0,793.2 L1122.0,791.6 L1129.0,787.4 L1137.0,781.0 L1145.0,750.9 L1152.0,745.1 L1160.0,740.8 L1167.0,743.1 L1175.0,730.1 L1183.0,701.0 L1190.0,688.4 L1198.0,752.0 L1205.0,787.8 L1213.0,778.6 L1220.0,785.8 L1228.0,776.3 L1236.0,796.7 L1243.0,802.9 L1251.0,816.1 L1258.0,833.0 L1266.0,861.5 L1274.0,872.3 L1281.0,856.2 L1289.0,833.5 L1296.0,849.1 L1304.0,834.5 L1311.0,814.1 L1319.0,809.7 L1327.0,801.0 L1334.0,793.2 L1342.0,820.9 L1349.0,776.7 L1357.0,759.2 L1365.0,789.3 L1372.0,807.4 L1380.0,798.0 L1387.0,795.5 L1395.0,818.8 L1402.0,836.5 L1410.0,807.3 L1418.0,827.1 L1425.0,785.4 L1433.0,779.6 L1440.0,776.7 L1448.0,822.3 L1456.0,806.8 L1463.0,790.9 L1471.0,775.2 L1478.0,797.1 L1486.0,801.9 L1493.0,806.8 L1501.0,814.9 L1509.0,791.3 L1516.0,788.9 L1524.0,810.7 L1531.0,808.3 L1539.0,816.9 L1547.0,801.9 L1554.0,786.8 L1562.0,780.6 L1569.0,768.9 L1577.0,758.7 L1584.0,738.5 L1592.0,737.9 L1600.0,747.6 L1607.0,767.0 L1615.0,761.6 L1622.0,747.6 L1630.0,744.1 L1638.0,775.7 L1645.0,773.4 L1653.0,785.8 L1660.0,832.6 L1668.0,848.9 L1675.0,852.7 L1683.0,890.2 L1691.0,879.5" stroke="#7e57c2" stroke-width="1.8" fill="none" stroke-linejoin="round"/><path d="M15.0,867.2 L22.0,871.4 L30.0,873.3 L38.0,874.1 L45.0,875.6 L53.0,878.2 L60.0,880.1 L68.0,885.3 L75.0,890.2 L83.0,895.6 L91.0,899.5 L98.0,902.4 L106.0,905.1 L113.0,901.2 L121.0,898.7 L129.0,895.8 L136.0,892.7 L144.0,891.4 L151.0,889.8 L159.0,889.2 L166.0,888.8 L174.0,886.8 L182.0,884.0 L189.0,880.4 L197.0,877.2 L204.0,874.9 L212.0,872.0 L220.0,875.7 L227.0,875.5 L235.0,875.8 L242.0,874.5 L250.0,873.8 L257.0,872.8 L265.0,871.1 L273.0,868.1 L280.0,862.9 L288.0,858.0 L295.0,854.7 L303.0,850.7 L311.0,850.2 L318.0,850.9 L326.0,850.5 L333.0,850.2 L341.0,849.0 L348.0,851.4 L356.0,852.8 L364.0,852.9 L371.0,853.4 L379.0,857.7 L386.0,862.6 L394.0,867.9 L402.0,869.1 L409.0,871.2 L417.0,870.0 L424.0,865.6 L432.0,862.3 L439.0,859.1 L447.0,856.5 L455.0,851.6 L462.0,846.2 L470.0,842.3 L477.0,836.8 L485.0,829.0 L492.0,822.6 L500.0,813.9 L508.0,808.1 L515.0,801.0 L523.0,795.6 L530.0,793.3 L538.0,791.0 L546.0,788.6 L553.0,786.1 L561.0,784.0 L568.0,782.0 L576.0,780.9 L583.0,781.5 L591.0,782.5 L599.0,782.5 L606.0,784.7 L614.0,786.9 L621.0,785.6 L629.0,781.7 L637.0,777.0 L644.0,773.8 L652.0,770.3 L659.0,765.3 L667.0,762.9 L674.0,763.7 L682.0,764.0 L690.0,764.0 L697.0,761.5 L705.0,761.4 L712.0,761.3 L720.0,760.0 L728.0,762.0 L735.0,767.1 L743.0,772.4 L750.0,776.0 L758.0,779.9 L765.0,784.6 L773.0,788.5 L781.0,791.6 L788.0,796.7 L796.0,801.5 L803.0,807.2 L811.0,811.6 L819.0,816.5 L826.0,822.7 L834.0,831.6 L841.0,838.3 L849.0,844.9 L856.0,849.9 L864.0,852.0 L872.0,853.4 L879.0,854.8 L887.0,856.8 L894.0,857.1 L902.0,857.9 L910.0,857.1 L917.0,856.4 L925.0,855.9 L932.0,855.1 L940.0,852.2 L947.0,852.0 L955.0,853.9 L963.0,857.1 L970.0,859.2 L978.0,861.7 L985.0,863.7 L993.0,864.5 L1001.0,863.4 L1008.0,859.7 L1016.0,857.4 L1023.0,854.3 L1031.0,852.3 L1038.0,849.2 L1046.0,846.0 L1054.0,842.8 L1061.0,838.6 L1069.0,832.0 L1076.0,830.7 L1084.0,829.0 L1092.0,825.5 L1099.0,818.8 L1107.0,813.9 L1114.0,812.2 L1122.0,810.8 L1129.0,809.6 L1137.0,805.4 L1145.0,800.9 L1152.0,795.9 L1160.0,789.5 L1167.0,783.0 L1175.0,775.7 L1183.0,766.6 L1190.0,757.9 L1198.0,754.9 L1205.0,755.8 L1213.0,755.7 L1220.0,755.2 L1228.0,753.9 L1236.0,754.6 L1243.0,756.5 L1251.0,761.2 L1258.0,767.5 L1266.0,775.8 L1274.0,784.8 L1281.0,794.6 L1289.0,803.9 L1296.0,815.0 L1304.0,820.3 L1311.0,822.4 L1319.0,824.6 L1327.0,825.5 L1334.0,826.9 L1342.0,828.8 L1349.0,827.1 L1357.0,822.9 L1365.0,819.6 L1372.0,815.7 L1380.0,810.4 L1387.0,806.0 L1395.0,805.0 L1402.0,804.1 L1410.0,802.0 L1418.0,802.9 L1425.0,801.1 L1433.0,799.6 L1440.0,798.5 L1448.0,798.8 L1456.0,800.8 L1463.0,803.1 L1471.0,802.2 L1478.0,801.6 L1486.0,801.9 L1493.0,802.6 L1501.0,802.2 L1509.0,799.1 L1516.0,797.8 L1524.0,796.7 L1531.0,798.3 L1539.0,801.0 L1547.0,802.7 L1554.0,800.2 L1562.0,798.3 L1569.0,796.8 L1577.0,795.2 L1584.0,791.2 L1592.0,786.7 L1600.0,782.6 L1607.0,778.8 L1615.0,776.5 L1622.0,773.6 L1630.0,769.3 L1638.0,766.9 L1645.0,763.7 L1653.0,762.3 L1660.0,765.9 L1668.0,770.5 L1675.0,776.5 L1683.0,786.7 L1691.0,796.4" stroke="#fdd835" stroke-width="1.8" fill="none" stroke-linejoin="round"/></g><text x="1733.5" y="601.0" font-size="23.5" fill="#b4b4b4" stroke="#b4b4b4" stroke-width="0.3" textLength="80" lengthAdjust="spacing">100.00</text><text x="1733.5" y="539.0" font-size="23.5" fill="#b4b4b4" stroke="#b4b4b4" stroke-width="0.3" textLength="80" lengthAdjust="spacing">120.00</text><text x="1733.5" y="477.0" font-size="23.5" fill="#b4b4b4" stroke="#b4b4b4" stroke-width="0.3" textLength="80" lengthAdjust="spacing">140.00</text><text x="1733.5" y="414.0" font-size="23.5" fill="#b4b4b4" stroke="#b4b4b4" stroke-width="0.3" textLength="80" lengthAdjust="spacing">160.00</text><text x="1733.5" y="352.0" font-size="23.5" fill="#b4b4b4" stroke="#b4b4b4" stroke-width="0.3" textLength="80" lengthAdjust="spacing">180.00</text><text x="1733.5" y="290.0" font-size="23.5" fill="#b4b4b4" stroke="#b4b4b4" stroke-width="0.3" textLength="80" lengthAdjust="spacing">200.00</text><text x="1733.5" y="228.0" font-size="23.5" fill="#b4b4b4" stroke="#b4b4b4" stroke-width="0.3" textLength="80" lengthAdjust="spacing">220.00</text><text x="1733.5" y="165.0" font-size="23.5" fill="#b4b4b4" stroke="#b4b4b4" stroke-width="0.3" textLength="80" lengthAdjust="spacing">240.00</text><text x="1733.5" y="103.0" font-size="23.5" fill="#b4b4b4" stroke="#b4b4b4" stroke-width="0.3" textLength="80" lengthAdjust="spacing">260.00</text><path d="M1718 196.0h104a4 4 0 0 1 4 4v26a4 4 0 0 1 -4 4h-104z" fill="#2962ff"/><text x="1733.5" y="221.4" font-size="23.5" fill="#ffffff" stroke="#ffffff" stroke-width="0.3" textLength="80" lengthAdjust="spacing">221.76</text><path d="M1718 276.0h104a4 4 0 0 1 4 4v26a4 4 0 0 1 -4 4h-104z" fill="#089981"/><text x="1733.5" y="301.4" font-size="23.5" fill="#ffffff" stroke="#ffffff" stroke-width="0.3" textLength="80" lengthAdjust="spacing">196.15</text><path d="M1718 622.8h98a4 4 0 0 1 4 4v26a4 4 0 0 1 -4 4h-98z" fill="#26a69a"/><text x="1733.5" y="648.2" font-size="23.5" fill="#ffffff" stroke="#ffffff" stroke-width="0.3" textLength="72" lengthAdjust="spacing">1.21 M</text><g clip-path="url(#cpax)"><text x="1733.5" y="709.4" font-size="23.5" fill="#b4b4b4" stroke="#b4b4b4" stroke-width="0.3" textLength="65" lengthAdjust="spacing">80.00</text><text x="1733.5" y="794.4" font-size="23.5" fill="#b4b4b4" stroke="#b4b4b4" stroke-width="0.3" textLength="65" lengthAdjust="spacing">60.00</text><text x="1733.5" y="878.4" font-size="23.5" fill="#b4b4b4" stroke="#b4b4b4" stroke-width="0.3" textLength="65" lengthAdjust="spacing">40.00</text><text x="1733.5" y="963.4" font-size="23.5" fill="#b4b4b4" stroke="#b4b4b4" stroke-width="0.3" textLength="65" lengthAdjust="spacing">20.00</text></g><path d="M1718 779.0h88a4 4 0 0 1 4 4v26a4 4 0 0 1 -4 4h-88z" fill="#fdd835"/><text x="1733.5" y="804.4" font-size="23.5" fill="#000000" stroke="#000000" stroke-width="0.3" textLength="65" lengthAdjust="spacing">57.33</text><path d="M1718 863.0h88a4 4 0 0 1 4 4v26a4 4 0 0 1 -4 4h-88z" fill="#7e57c2"/><text x="1733.5" y="888.4" font-size="23.5" fill="#ffffff" stroke="#ffffff" stroke-width="0.3" textLength="65" lengthAdjust="spacing">37.55</text><text x="36.20" y="93.75" font-size="23.5" fill="#c6c6c6" stroke="#c6c6c6" stroke-width="0.35" textLength="333.5" lengthAdjust="spacing">SOL / TetherUS · 1D · Binance</text><text x="382.80" y="93.75" font-size="23.5" fill="#cfcfcf" stroke="#cfcfcf" stroke-width="0.35" textLength="15.5" lengthAdjust="spacing">O</text><text x="400.80" y="93.75" font-size="23.5" fill="#089981" stroke="#089981" stroke-width="0.35" textLength="75.5" lengthAdjust="spacing">192.73</text><text x="490.20" y="93.75" font-size="23.5" fill="#cfcfcf" stroke="#cfcfcf" stroke-width="0.35" textLength="14" lengthAdjust="spacing">H</text><text x="507.10" y="93.75" font-size="23.5" fill="#089981" stroke="#089981" stroke-width="0.35" textLength="73.5" lengthAdjust="spacing">197.55</text><text x="594.70" y="93.75" font-size="23.5" fill="#cfcfcf" stroke="#cfcfcf" stroke-width="0.35" textLength="10.5" lengthAdjust="spacing">L</text><text x="609.00" y="93.75" font-size="23.5" fill="#089981" stroke="#089981" stroke-width="0.35" textLength="75.9" lengthAdjust="spacing">192.53</text><text x="698.90" y="93.75" font-size="23.5" fill="#cfcfcf" stroke="#cfcfcf" stroke-width="0.35" textLength="14.5" lengthAdjust="spacing">C</text><text x="716.90" y="93.75" font-size="23.5" fill="#089981" stroke="#089981" stroke-width="0.35" textLength="71.5" lengthAdjust="spacing">196.15</text><text x="804.80" y="93.75" font-size="23.5" fill="#089981" stroke="#089981" stroke-width="0.35" textLength="166" lengthAdjust="spacing">+3.41 (+1.77%)</text><text x="37.20" y="127.5" font-size="23.5" fill="#c6c6c6" stroke="#c6c6c6" stroke-width="0.35" textLength="101.5" lengthAdjust="spacing">Vol · SOL</text><text x="152.45" y="127.5" font-size="23.5" fill="#26a69a" stroke="#26a69a" stroke-width="0.35" textLength="68" lengthAdjust="spacing">1.21 M</text><text x="36.20" y="161.25" font-size="23.5" fill="#c6c6c6" stroke="#c6c6c6" stroke-width="0.35" textLength="164.25" lengthAdjust="spacing">SMA (9, close)</text><text x="215.70" y="161.25" font-size="23.5" fill="#2962ff" stroke="#2962ff" stroke-width="0.35" textLength="73" lengthAdjust="spacing">221.76</text><text x="35.20" y="698.4" font-size="23.5" fill="#c6c6c6" stroke="#c6c6c6" stroke-width="0.35" textLength="162.5" lengthAdjust="spacing">RSI (14, close)</text><text x="212.20" y="698.4" font-size="23.5" fill="#7e57c2" stroke="#7e57c2" stroke-width="0.35" textLength="61.5" lengthAdjust="spacing">37.55</text><text x="287.70" y="698.4" font-size="23.5" fill="#fdd835" stroke="#fdd835" stroke-width="0.35" textLength="62.25" lengthAdjust="spacing">57.33</text><text x="83.5" y="998.2" font-size="23.5" font-weight="bold" fill="#b9b9b9" textLength="45" lengthAdjust="spacingAndGlyphs">Mar</text><text x="320.0" y="998.2" font-size="23.5" font-weight="bold" fill="#b9b9b9" textLength="41.5" lengthAdjust="spacingAndGlyphs">Apr</text><text x="544.0" y="998.2" font-size="23.5" font-weight="bold" fill="#b9b9b9" textLength="48.5" lengthAdjust="spacingAndGlyphs">May</text><text x="781.5" y="998.2" font-size="23.5" font-weight="bold" fill="#b9b9b9" textLength="43.5" lengthAdjust="spacingAndGlyphs">Jun</text><text x="1014.0" y="998.2" font-size="23.5" font-weight="bold" fill="#b9b9b9" textLength="34" lengthAdjust="spacingAndGlyphs">Jul</text><text x="1243.0" y="998.2" font-size="23.5" font-weight="bold" fill="#b9b9b9" textLength="46" lengthAdjust="spacingAndGlyphs">Aug</text><text x="1479.0" y="998.2" font-size="23.5" font-weight="bold" fill="#b9b9b9" textLength="44" lengthAdjust="spacingAndGlyphs">Sep</text><g fill="#d9d9d9"><path d="M24 1060H48V1090H36V1072H24z"/><circle cx="57.95" cy="1066.1" r="6.05"/><path d="M71.3 1060H83.9L72.25 1090H57.9z"/><text x="98" y="1090" font-size="41.5" font-weight="bold" textLength="242" lengthAdjust="spacingAndGlyphs">TradingView</text></g></svg></body></html>
